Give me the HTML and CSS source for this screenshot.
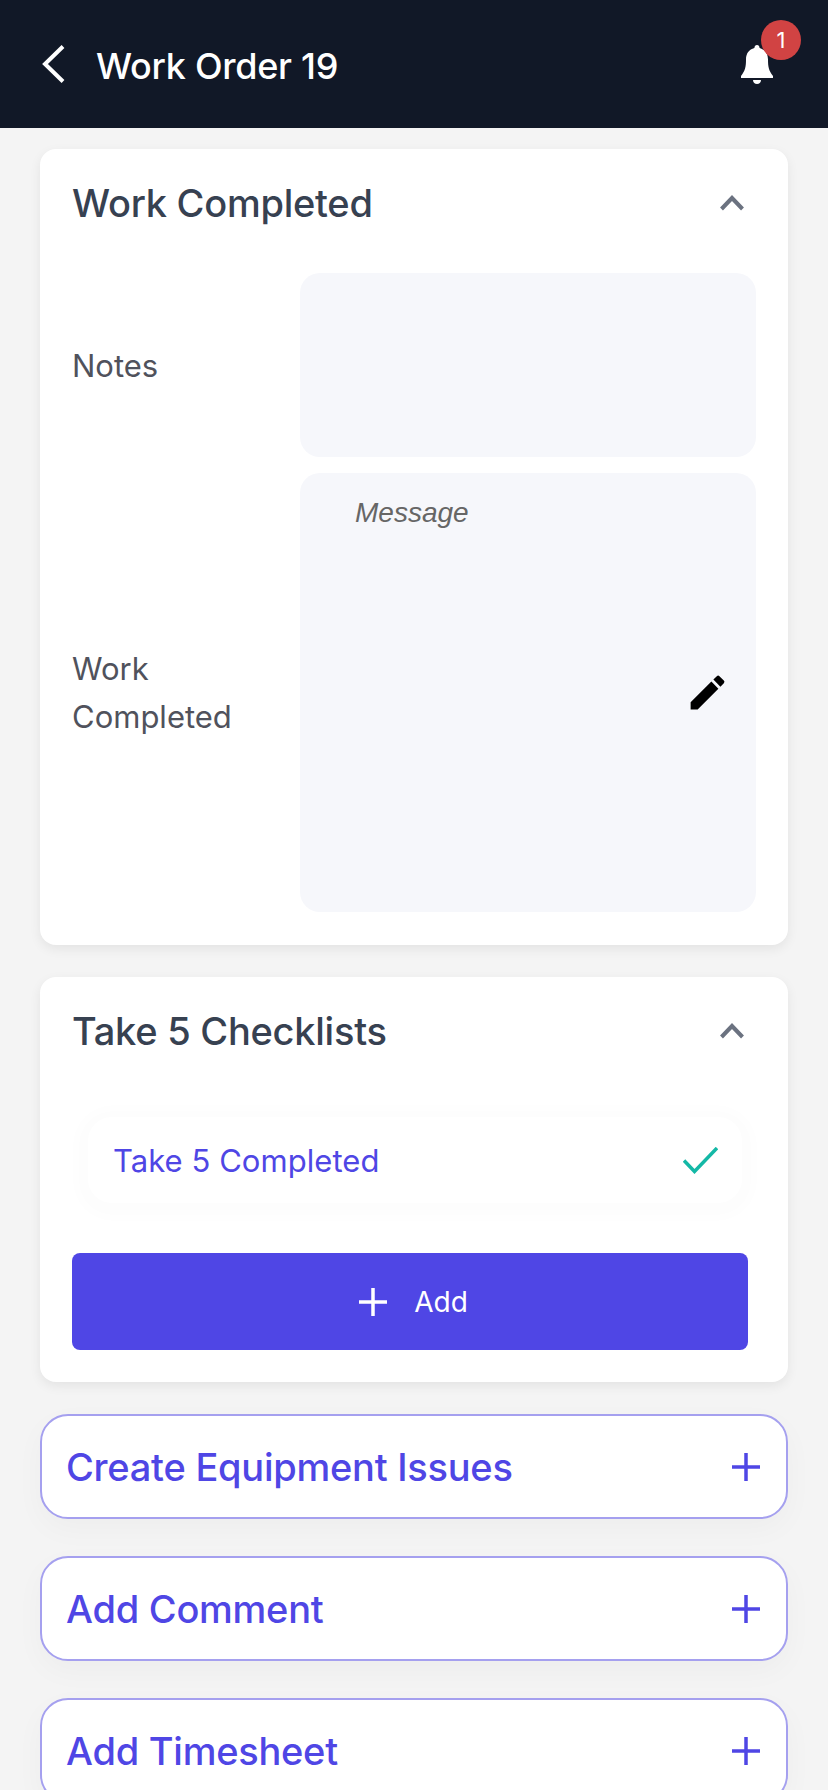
FILE: index.html
```html
<!DOCTYPE html>
<html lang="en">
<head>
<meta charset="utf-8">
<title>Work Order 19</title>
<link rel="stylesheet" href="styles.css">
</head>
<body>
<div class="screen">
  <header class="topbar">
    <div class="topbar-left">
      <svg class="back" viewBox="0 0 24 38" aria-hidden="true"><path d="M22 1.500 4 19l18 17.500" fill="none" stroke="#fff" stroke-width="4"/></svg>
      <h1 class="topbar-title">Work Order 19</h1>
    </div>
    <div class="bell-wrap">
      <svg class="bell" viewBox="0 0 32 39" aria-hidden="true"><path d="M16 0c1.500 0 2.500 1.200 2.600 3C24 4.500 27 8.500 27 14.500c0 7 .6 11 5 16.500v2H0v-2c4.400-5.500 5-9.500 5-16.500C5 8.500 8 4.500 13.400 3 13.500 1.200 14.500 0 16 0Z" fill="#fff"/><path d="M12 35h8c0 2.500-1.800 4-4 4s-4-1.500-4-4Z" fill="#fff"/></svg>
      <span class="badge">1</span>
    </div>
  </header>

  <main class="content">
    <section class="card">
      <div class="card-head">
        <h2 class="card-title">Work Completed</h2>
        <svg class="chev" viewBox="0 0 24 16" aria-hidden="true"><path d="M1.500 14 12 3l10.500 11" fill="none" stroke="#6b7280" stroke-width="4"/></svg>
      </div>
      <div class="fields">
        <div class="field">
          <span class="field-label">Notes</span>
          <div class="field-box notes-box"></div>
        </div>
        <div class="field">
          <span class="field-label">Work Completed</span>
          <div class="field-box message-box">
            <span class="placeholder">Message</span>
            <svg class="pencil" viewBox="0 0 24 24" aria-hidden="true"><path d="M3 17.250V21h3.750L17.810 9.940l-3.750-3.750L3 17.250ZM20.710 7.040a1 1 0 0 0 0-1.410l-2.340-2.340a1 1 0 0 0-1.410 0l-1.830 1.830 3.750 3.750 1.830-1.830Z" fill="#000"/></svg>
          </div>
        </div>
      </div>
    </section>

    <section class="card">
      <div class="card-head">
        <h2 class="card-title">Take 5 Checklists</h2>
        <svg class="chev" viewBox="0 0 24 16" aria-hidden="true"><path d="M1.500 14 12 3l10.500 11" fill="none" stroke="#6b7280" stroke-width="4"/></svg>
      </div>
      <div class="check-item">
        <span class="check-name">Take 5 Completed</span>
        <svg class="check" viewBox="0 0 35 27" aria-hidden="true"><path d="M1 13.500l10.500 11L34 1" fill="none" stroke="#14b8a6" stroke-width="3.500"/></svg>
      </div>
      <button class="add-btn" type="button">
        <svg class="add-plus" viewBox="0 0 28 28" aria-hidden="true"><path d="M14 0v28M0 14h28" stroke="#fff" stroke-width="3.500"/></svg>
        <span>Add</span>
      </button>
    </section>

    <a class="action"><span>Create Equipment Issues</span><svg class="action-plus" viewBox="0 0 28 28" aria-hidden="true"><path d="M14 0v28M0 14h28" stroke="#4f46e5" stroke-width="3.500"/></svg></a>
    <a class="action"><span>Add Comment</span><svg class="action-plus" viewBox="0 0 28 28" aria-hidden="true"><path d="M14 0v28M0 14h28" stroke="#4f46e5" stroke-width="3.500"/></svg></a>
    <a class="action"><span>Add Timesheet</span><svg class="action-plus" viewBox="0 0 28 28" aria-hidden="true"><path d="M14 0v28M0 14h28" stroke="#4f46e5" stroke-width="3.500"/></svg></a>
  </main>
</div>
</body>
</html>
```
FILE: styles.css
```css
* { box-sizing: border-box; }
html, body { margin: 0; padding: 0; }
body {
  width: 828px;
  height: 1792px;
  overflow: hidden;
  background: #fff;
  font-family: Inter, "Liberation Sans", sans-serif;
}
.screen {
  height: 1790px;
  overflow: hidden;
  background: #f4f4f4;
}

/* top bar */
.topbar {
  height: 128px;
  background: #111827;
  display: flex;
  align-items: center;
  justify-content: space-between;
  padding: 0 55px 0 41px;
}
.topbar-left { display: flex; align-items: center; gap: 31px; }
.back { width: 24px; height: 38px; display: block; }
.topbar-title {
  margin: 4px 0 0;
  color: #fff;
  font-size: 36px;
  line-height: 40px;
  font-weight: 500;
  letter-spacing: -.27px;
}
.bell-wrap { position: relative; width: 32px; height: 39px; margin-top: 1px; }
.bell { display: block; width: 32px; height: 39px; }
.badge {
  position: absolute;
  left: 20px;
  top: -25px;
  width: 40px;
  height: 40px;
  border-radius: 50%;
  background: #d14343;
  color: #fff;
  font-size: 22px;
  line-height: 40px;
  text-align: center;
}

/* page body */
.content {
  padding: 21px 40px 0;
  display: flex;
  flex-direction: column;
  gap: 32px;
}
.card {
  background: #fff;
  border-radius: 16px;
  padding: 0 32px;
  box-shadow: 0 4px 12px rgba(0, 0, 0, .07);
}
.card-head {
  height: 108px;
  display: flex;
  align-items: center;
  justify-content: space-between;
}
.card-title {
  margin: 0;
  color: #374151;
  font-size: 38px;
  line-height: 44px;
  font-weight: 500;
  letter-spacing: -.25px;
}
.chev { width: 24px; height: 16px; display: block; margin: 0 12px 0 0; }

/* form rows */
.fields { display: flex; flex-direction: column; gap: 16px; padding-bottom: 33px; margin-top: 16px; }
.field { display: flex; align-items: center; }
.field-label {
  width: 228px;
  padding: 1px 30px 0 0;
  color: #50525c;
  font-size: 31px;
  line-height: 48px;
}
.field-box {
  width: 456px;
  border-radius: 20px;
  background: #f6f7fb;
}
.notes-box { height: 184px; }
.message-box {
  height: 439px;
  position: relative;
  padding: 22px 0 0 55px;
}
.placeholder {
  color: #666;
  font-family: "Liberation Sans", sans-serif;
  font-size: 28px;
  line-height: 36px;
  font-style: italic;
}
.pencil { position: absolute; left: 385px; top: 197px; width: 45px; height: 45px; }

/* checklist */
.check-item {
  height: 86px;
  margin: 32px 14px 50px 16px;
  padding: 0 24px 0 25px;
  border-radius: 24px;
  display: flex;
  align-items: center;
  justify-content: space-between;
  box-shadow: 0 3px 14px 12px rgba(0, 0, 0, .013);
}
.check-name { color: #4f46e5; font-size: 31px; font-weight: 400; letter-spacing: .05px; }
.check { width: 35px; height: 27px; }
.add-btn {
  width: 676px;
  height: 97px;
  margin: 0 0 32px;
  padding: 0 0 0 7px;
  border: 0;
  border-radius: 8px;
  background: #4f46e5;
  color: #fff;
  font: 400 28px Inter, sans-serif;
  display: flex;
  align-items: center;
  justify-content: center;
  gap: 27px;
}
.add-plus { width: 28px; height: 28px; }

/* action rows */
.action {
  height: 105px;
  flex: none;
  margin-bottom: 5px;
  padding: 0 26px 0 24px;
  background: #fff;
  border: 2px solid #a5a0ef;
  border-radius: 28px;
  color: #4f46e5;
  font-size: 38px;
  font-weight: 500;
  letter-spacing: -.25px;
  display: flex;
  align-items: center;
  justify-content: space-between;
  box-shadow: 0 10px 30px rgba(0, 0, 0, .03);
}
.action-plus { width: 28px; height: 28px; }
```
